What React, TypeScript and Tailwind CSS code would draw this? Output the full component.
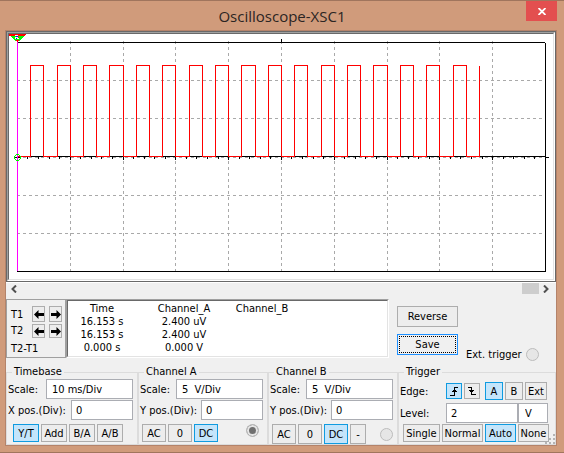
import React, { useState } from 'react';
import clsx from 'clsx';

const highPulses = [
    [30, 43], [57, 70], [83, 96], [109, 123], [136, 149], [162, 175],
    [189, 202], [215, 228], [241, 255], [268, 281], [294, 307], [321, 334],
    [347, 360], [373, 387], [400, 413], [426, 439], [453, 466],
];

const gridX = [70, 123, 175, 228, 281, 334, 387, 439, 492];
const gridY = [80, 118, 157, 195, 233];

const wavePath =
    'M17.5 156.5' +
    highPulses.map(([a, b]) => `H${a + 0.5}V65.5H${b + 0.5}V156.5`).join('') +
    'H479.5V66';

const readings = [
    ['16.153 s', '2.400 uV', ''],
    ['16.153 s', '2.400 uV', ''],
    ['0.000 s', '0.000 V', ''],
];

interface PushProps {
    children: React.ReactNode;
    active?: boolean;
    className?: string;
    label?: string;
    onClick?: () => void;
}

const Push: React.FC<PushProps> = ({ children, active, className, label, onClick }) => (
    <button
        type="button"
        aria-label={label}
        aria-pressed={active}
        onClick={onClick}
        className={clsx(
            'flex shrink-0 items-center justify-center border whitespace-nowrap',
            active ? 'border-[#0f9be0] bg-[#c4e5fb]' : 'border-[#adadad] bg-[#ededed]',
            className
        )}
    >
        {children}
    </button>
);

interface FieldProps {
    id: string;
    label: string;
    value: string;
    className?: string;
}

const Field: React.FC<FieldProps> = ({ id, label, value, className }) => (
    <div className="flex items-center justify-between">
        <label htmlFor={id} className="whitespace-nowrap">{label}</label>
        <input
            id={id}
            type="text"
            defaultValue={value}
            className={clsx('h-5 border border-[#abadb3] bg-white', className)}
        />
    </div>
);

const Group: React.FC<{ title: string; children: React.ReactNode }> = ({ title, children }) => (
    <fieldset className="h-20 min-w-0 border border-[#dcdcdc] pr-1 pl-px">
        <legend className="ml-1 px-0.5 leading-[14px]">{title}</legend>
        {children}
    </fieldset>
);

const Terminal: React.FC<{ label: string; on?: boolean }> = ({ label, on }) => (
    <input
        type="radio"
        aria-label={label}
        defaultChecked={on}
        className="block size-[13px] shrink-0 appearance-none rounded-full border border-[#bcbcbc] bg-[#e6e6e6] checked:bg-[#707070] checked:shadow-[inset_0_0_0_2px_#e6e6e6]"
    />
);

const LeftArrow = () => (
    <svg viewBox="0 0 10 9" className="h-[9px] w-[10px] shrink-0">
        <path d="M0 4.5 4.5 0v3H10v3H4.5v3z" fill="#000" />
    </svg>
);

const RightArrow = () => (
    <svg viewBox="0 0 10 9" className="h-[9px] w-[10px] shrink-0">
        <path d="M10 4.5 5.5 0v3H0v3h5.5v3z" fill="#000" />
    </svg>
);

const Screen = () => (
    <svg viewBox="9 34 544 245" className="block w-full" shapeRendering="crispEdges" fill="none">
        <g stroke="#a9a9a9" strokeDasharray="3 3">
            {gridX.map((x) => <path key={x} d={`M${x + 0.5} 41V271`} />)}
            {gridY.map((y) => <path key={y} d={`M17 ${y + 0.5}H545`} />)}
        </g>
        <path d="M17 42.5H545M545.5 43V272M17 271.5H546M17 156.5H545M281.5 39V42M545 157.5H549" stroke="#000" />
        {Array.from({ length: 49 }, (_, i) => {
            const x = Math.floor(17.4 + (i + 1) * 10.56);
            return <path key={i} d={`M${x + 0.5} ${i % 5 === 4 ? '156V160' : '157V159'}`} stroke="#000" />;
        })}
        <path d={wavePath} stroke="#f00" />
        <path d="M17.5 42V271" stroke="#f0f" />
        {/* T1 cursor handle */}
        <path d="M9 34H26V35H25V36H9z" fill="#f00" />
        <path d="M11 36H24V37H23V38H22V39H21V40H20V41H15V40H14V39H13V38H12V37H11z" fill="#0f0" />
        <path d="M15 35H18V36H15zM15 37H19V39H15z" fill="#fff" />
        <path d="M16 36H18V37H16zM16 38H17V39H16z" fill="#00f" />
        <path d="M18 37H19V38H18zM16 40H19V41H18V42H17V41H16z" fill="#f00" />
        {/* ground reference for channel A */}
        <path d="M14 157.5H21M17.5 154V161" stroke="#000" />
        <path d="M16 154.5H19M15 155.5H16M19 155.5H20M14.5 156V159M20.5 156V159M15 159.5H16M19 159.5H20M16 160.5H19" stroke="#00f000" />
        <path d="M17.5 155V160" stroke="#f0f" />
    </svg>
);

const App: React.FC = () => {
    const [mode, setMode] = useState('Y/T');
    const [couplingA, setCouplingA] = useState('DC');
    const [couplingB, setCouplingB] = useState('DC');
    const [edge, setEdge] = useState('rising');
    const [source, setSource] = useState('A');
    const [sweep, setSweep] = useState('Auto');

    return (
        <div className="border-t border-b border-[#a0755d] bg-[#d09b7b] pb-1.5 font-['DejaVu_Sans_Condensed','Noto_Sans',sans-serif] text-[11px] leading-[13px] text-black">
            <header className="relative flex h-[29px] items-center justify-center">
                <h1 className="font-['Open_Sans',sans-serif] text-[15px] leading-5 text-[#2b2523]">Oscilloscope-XSC1</h1>
                <button type="button" aria-label="Close" className="absolute top-0 right-[7px] flex h-5 w-[31px] items-center justify-center bg-[#e34f4f]">
                    <svg viewBox="0 0 8 7" className="h-[7px] w-2" stroke="#fff" strokeWidth="1.8">
                        <path d="M.5 0 7.5 7M7.5 0 .5 7" />
                    </svg>
                </button>
            </header>

            <main className="relative mr-[7px] ml-[5px] border border-[#b4836a] bg-[#f0f0f0]">
                <div className="border border-[#696969]">
                    <div className="border-t border-r border-b border-l border-t-[#a0a0a0] border-r-white border-b-white border-l-[#a0a0a0]">
                        <div className="border border-t-[#696969] border-r-[#e3e3e3] border-b-[#e3e3e3] border-l-[#696969] bg-white">
                            <Screen />
                        </div>
                    </div>
                </div>

                <div className="flex h-[17px] items-start border-t border-white pr-1 pl-0.5">
                    <button type="button" aria-label="Scroll left" className="flex h-3 w-3 items-center justify-center">
                        <svg viewBox="0 0 6 8" className="h-2 w-1.5" fill="none" stroke="#505050" strokeWidth="2"><path d="M5 .5 1.5 4 5 7.5" /></svg>
                    </button>
                    <div className="flex flex-1 justify-end pr-px">
                        <div className="h-[11px] w-[17px] bg-[#cdcdcd]" />
                    </div>
                    <button type="button" aria-label="Scroll right" className="flex h-3 w-3 items-center justify-center">
                        <svg viewBox="0 0 6 8" className="h-2 w-1.5" fill="none" stroke="#505050" strokeWidth="2"><path d="M1 .5 4.5 4 1 7.5" /></svg>
                    </button>
                </div>

                <section className="flex h-[59px]">
                    <div className="w-[60px] shrink-0 border border-[#a0a0a0] pt-1.5 pl-1">
                        <div className="grid grid-cols-[17px_13px_13px] gap-x-1 gap-y-0.5">
                            <span className="self-center">T1</span>
                            <Push label="T1 back" className="h-4"><LeftArrow /></Push>
                            <Push label="T1 forward" className="h-4"><RightArrow /></Push>
                            <span>T2</span>
                            <Push label="T2 back" className="h-[14px]"><LeftArrow /></Push>
                            <Push label="T2 forward" className="h-[14px]"><RightArrow /></Push>
                        </div>
                        <div className="mt-1">T2-T1</div>
                    </div>
                    <div className="w-[323px] shrink-0 border border-t-[#a0a0a0] border-r-white border-b-white border-l-[#a0a0a0]">
                        <div className="h-full border border-t-[#696969] border-r-[#e3e3e3] border-b-[#e3e3e3] border-l-[#696969] bg-white pt-px">
                            <table className="text-center">
                                <thead>
                                    <tr>
                                        <th className="w-[68px] p-0 font-normal">Time</th>
                                        <th className="w-[96px] p-0 font-normal">Channel_A</th>
                                        <th className="w-[60px] p-0 font-normal">Channel_B</th>
                                    </tr>
                                </thead>
                                <tbody>
                                    {readings.map((row, i) => (
                                        <tr key={i}>
                                            {row.map((cell, j) => <td key={j} className="p-0">{cell}</td>)}
                                        </tr>
                                    ))}
                                </tbody>
                            </table>
                        </div>
                    </div>
                    <div className="flex flex-col gap-[7px] pt-[7px] pl-2">
                        <Push className="h-[21px] w-[61px]">Reverse</Push>
                        <button type="button" className="h-[21px] w-[61px] border border-[#1e90ff] p-px">
                            <span className="flex h-full items-center justify-center border border-dotted border-black">Save</span>
                        </button>
                    </div>
                    <label className="mt-[49px] ml-2 flex h-[13px] items-center gap-1 whitespace-nowrap">
                        Ext. trigger
                        <Terminal label="External trigger" />
                    </label>
                </section>

                <section className="mt-[7px] grid grid-cols-[132fr_130fr_130fr_158fr]">
                    <Group title="Timebase">
                        <div className="flex flex-col gap-px">
                            <Field id="tb-scale" label="Scale:" value="10 ms/Div" className="w-[87px] px-[5px]" />
                            <Field id="tb-pos" label="X pos.(Div):" value="0" className="w-[62px] px-1" />
                        </div>
                        <div className="mt-1 flex gap-0.5 pl-[5px]">
                            {['Y/T', 'Add', 'B/A', 'A/B'].map((m) => (
                                <Push key={m} active={mode === m} onClick={() => setMode(m)} className="h-[18px] w-[26px]">{m}</Push>
                            ))}
                        </div>
                    </Group>

                    <Group title="Channel A">
                        <div className="flex flex-col gap-px">
                            <Field id="a-scale" label="Scale:" value="5  V/Div" className="w-[87px] px-[5px]" />
                            <Field id="a-pos" label="Y pos.(Div):" value="0" className="w-[62px] px-1" />
                        </div>
                        <div className="mt-1 flex gap-0.5 pl-0.5">
                            {['AC', '0', 'DC'].map((c) => (
                                <Push key={c} active={couplingA === c} onClick={() => setCouplingA(c)} className="h-[18px] w-6">{c}</Push>
                            ))}
                            <span className="mr-1 ml-auto"><Terminal label="Channel A terminal" on /></span>
                        </div>
                    </Group>

                    <Group title="Channel B">
                        <div className="flex flex-col gap-px">
                            <Field id="b-scale" label="Scale:" value="5  V/Div" className="w-[87px] px-[5px]" />
                            <Field id="b-pos" label="Y pos.(Div):" value="0" className="w-[62px] px-1" />
                        </div>
                        <div className="mt-1 flex gap-0.5 pl-0.5">
                            {['AC', '0', 'DC', '-'].map((c) => (
                                <Push
                                    key={c}
                                    active={couplingB === c}
                                    onClick={() => setCouplingB(c)}
                                    className={clsx('h-5', c === '-' ? 'w-4' : 'w-6')}
                                >
                                    {c}
                                </Push>
                            ))}
                            <span className="ml-auto self-center"><Terminal label="Channel B terminal" /></span>
                        </div>
                    </Group>

                    <Group title="Trigger">
                        <div className="flex h-6 items-center">
                            <span className="w-[46px]">Edge:</span>
                            <div className="flex gap-0.5">
                                <Push label="Rising edge" active={edge === 'rising'} onClick={() => setEdge('rising')} className="size-4">
                                    <svg viewBox="0 0 10 10" className="size-[10px]" fill="none" stroke="#000" shapeRendering="crispEdges">
                                        <path d="M1 9.5H5M5.5 10V1M5 1.5H9M3 5.5H8M4 4.5H7" />
                                    </svg>
                                </Push>
                                <Push label="Falling edge" active={edge === 'falling'} onClick={() => setEdge('falling')} className="size-4">
                                    <svg viewBox="0 0 10 10" className="size-[10px]" fill="none" stroke="#000" shapeRendering="crispEdges">
                                        <path d="M1 1.5H5M4.5 1V9M4 8.5H9M2 4.5H7M3 5.5H6" />
                                    </svg>
                                </Push>
                            </div>
                            <div className="ml-[5px] flex gap-0.5">
                                {['A', 'B', 'Ext'].map((s) => (
                                    <Push
                                        key={s}
                                        active={source === s}
                                        onClick={() => setSource(s)}
                                        className={clsx('h-[18px]', s === 'Ext' ? 'w-[22px]' : 'w-[18px]')}
                                    >
                                        {s}
                                    </Push>
                                ))}
                            </div>
                        </div>
                        <div className="flex items-center">
                            <label htmlFor="level" className="w-[46px]">Level:</label>
                            <input id="level" type="text" defaultValue="2" className="h-5 w-[72px] border border-[#abadb3] bg-white px-1" />
                            <input aria-label="Level unit" type="text" defaultValue="V" className="h-5 w-[30px] border border-[#abadb3] bg-white px-1.5" />
                        </div>
                        <div className="mt-px flex gap-0.5 pl-[3px]">
                            {['Single', 'Normal', 'Auto', 'None'].map((s) => (
                                <Push
                                    key={s}
                                    active={sweep === s}
                                    onClick={() => setSweep(s)}
                                    className={clsx('h-[18px]', s === 'Normal' ? 'w-[41px]' : s === 'Single' ? 'w-[37px]' : 'w-[31px]')}
                                >
                                    {s}
                                </Push>
                            ))}
                        </div>
                    </Group>
                </section>

                {/* resize grip */}
                <svg viewBox="0 0 10 10" className="absolute right-px bottom-px size-[10px]" fill="#b4b4b4" shapeRendering="crispEdges">
                    <path d="M8 0h2v2H8zM8 4h2v2H8zM4 4h2v2H4zM8 8h2v2H8zM4 8h2v2H4zM0 8h2v2H0z" />
                </svg>
            </main>
        </div>
    );
};

export default App;
